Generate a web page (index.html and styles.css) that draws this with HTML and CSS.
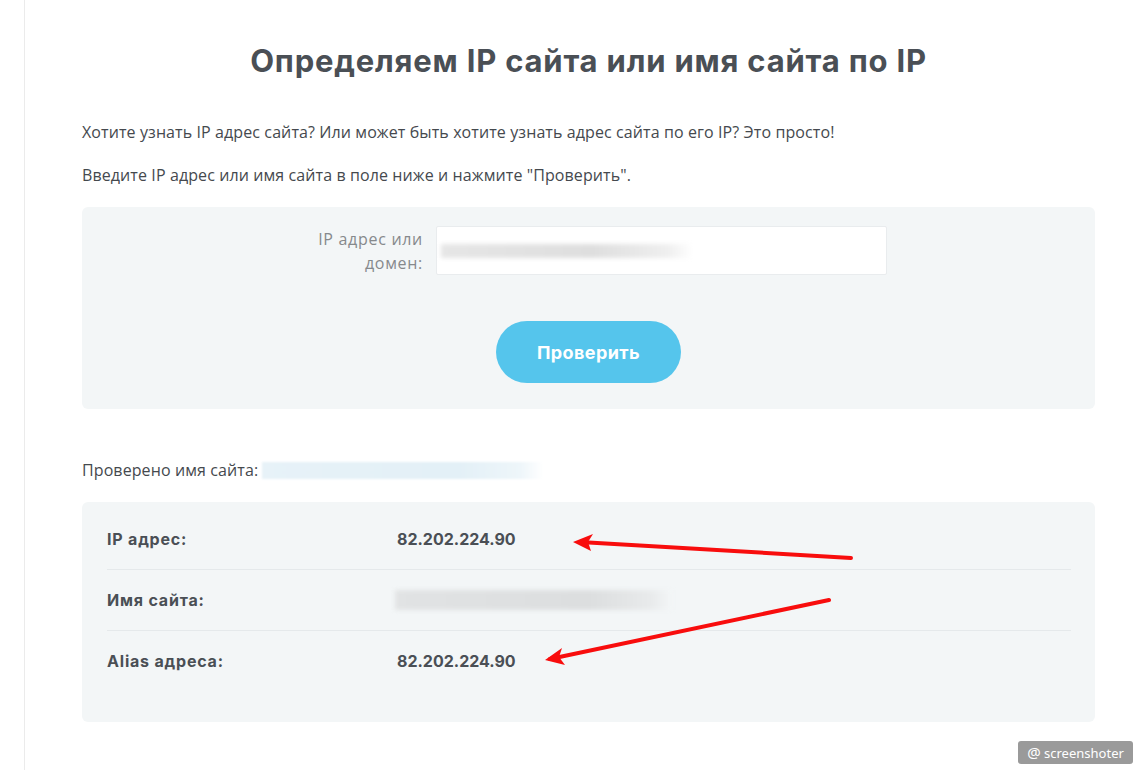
FILE: index.html
```html
<!DOCTYPE html>
<html lang="ru">
<head>
<meta charset="utf-8">
<title>Определяем IP сайта</title>
<link rel="stylesheet" href="styles.css">
</head>
<body>
<div class="page">
  <main class="content">
    <h1 class="title">Определяем IP сайта или имя сайта по IP</h1>
    <p class="lead">Хотите узнать IP адрес сайта? Или может быть хотите узнать адрес сайта по его IP? Это просто!</p>
    <p class="lead">Введите IP адрес или имя сайта в поле ниже и нажмите "Проверить".</p>

    <form class="form-box">
      <div class="field">
        <label class="field-label">IP адрес или<br>домен:</label>
        <div class="field-input"><span class="blur blur-input"></span></div>
      </div>
      <div class="actions">
        <button type="button" class="btn">Проверить</button>
      </div>
    </form>

    <p class="checked">Проверено имя сайта: <span class="blur blur-checked"></span></p>

    <div class="results">
      <div class="row">
        <span class="row-label">IP адрес:</span>
        <span class="row-value">82.202.224.90</span>
      </div>
      <div class="row">
        <span class="row-label">Имя сайта:</span>
        <span class="row-value"><span class="blur blur-name"></span></span>
      </div>
      <div class="row">
        <span class="row-label">Alias адреса:</span>
        <span class="row-value">82.202.224.90</span>
      </div>
    </div>
  </main>
</div>

<svg class="arrows" width="1140" height="770" viewBox="0 0 1140 770">
  <g stroke="#f80d0d" stroke-width="4" stroke-linecap="round" stroke-linejoin="round" fill="none">
    <line x1="851" y1="558" x2="580" y2="542"/>
    <line x1="829" y1="600" x2="550" y2="659"/>
  </g>
  <g fill="#f80d0d">
    <polygon points="573,542 593,534 588,542 591,551"/>
    <polygon points="545,660 562,648 559,657 565,665"/>
  </g>
</svg>

<div class="badge"><span class="badge-at">@</span> screenshoter</div>
</body>
</html>
```

FILE: styles.css
```css
* { box-sizing: border-box; }

html, body {
  margin: 0;
  padding: 0;
  background: #ffffff;
}

body {
  font-family: "Open Sans", "Lato", "Liberation Sans", sans-serif;
  color: #45494e;
  width: 1140px;
  height: 770px;
  overflow: hidden;
  position: relative;
}

.page {
  margin-left: 24px;
  border-left: 1px solid #ebebeb;
  min-height: 770px;
  padding: 0 44px 0 57px;
}

.content {
  width: 1013px;
}

.title {
  margin: 0;
  padding-top: 42px;
  text-align: center;
  font-family: "Inter", "Noto Sans", sans-serif;
  font-weight: 700;
  font-size: 31px;
  line-height: 38px;
  color: #4a4f55;
  letter-spacing: 0.8px;
}

.lead {
  margin: 0;
  font-size: 16px;
  line-height: 20px;
  letter-spacing: 0.1px;
}

.title + .lead { margin-top: 42px; }
.lead + .lead { margin-top: 23px; }

.form-box {
  margin: 22px 0 0;
  background: #f3f6f7;
  border-radius: 6px;
  padding: 19px 0 25px;
  height: 202px;
}

.field {
  display: flex;
  align-items: center;
  margin-left: 213px;
}

.field-label {
  width: 141px;
  text-align: right;
  color: #86898c;
  font-size: 16px;
  line-height: 24px;
  letter-spacing: 0.7px;
  padding-right: 13px;
}

.field-input {
  width: 451px;
  height: 49px;
  background: #ffffff;
  border: 1px solid #e9ecee;
  border-radius: 2px;
  display: flex;
  align-items: center;
  padding-left: 4px;
}

.blur {
  display: inline-block;
  filter: blur(2px);
}

.blur-input {
  width: 252px;
  height: 14px;
  background: linear-gradient(90deg, #e6e6e6 0%, #dedede 60%, #efefef 90%, #ffffff 100%);
}

.actions {
  display: flex;
  justify-content: center;
  margin-top: 46px;
}

.btn {
  width: 185px;
  height: 62px;
  border: none;
  border-radius: 31px;
  background: #55c5ec;
  color: #ffffff;
  font-family: "Inter", "Noto Sans", sans-serif;
  font-weight: 700;
  font-size: 18px;
  letter-spacing: 0.4px;
  cursor: pointer;
}

.checked {
  margin: 51px 0 0;
  font-size: 16px;
  line-height: 20px;
  letter-spacing: 0.1px;
  display: flex;
  align-items: center;
}

.blur-checked {
  margin-left: 4px;
  width: 281px;
  height: 17px;
  background: linear-gradient(90deg, #e7f2f8 0%, #e3f0f7 70%, #eef6fa 92%, #ffffff 100%);
  filter: blur(1px);
}

.results {
  margin-top: 22px;
  background: #f3f6f7;
  border-radius: 6px;
  padding: 7px 24px 31px 25px;
}

.row {
  display: flex;
  align-items: center;
  height: 61px;
  border-bottom: 1px solid #e5e9eb;
  font-family: "Inter", "Noto Sans", sans-serif;
  font-weight: 700;
  font-size: 16px;
  color: #4a4f55;
}

.row:last-child { border-bottom: none; height: 60px; }

.row-label {
  width: 290px;
  letter-spacing: 0.8px;
}

.row-value {
  display: flex;
  align-items: center;
}

.blur-name {
  margin-left: -2px;
  width: 277px;
  height: 20px;
  background: linear-gradient(90deg, #e1e3e4 0%, #dcdedf 70%, #e8eaeb 92%, #f3f6f7 100%);
}

.arrows {
  position: absolute;
  left: 0;
  top: 0;
  pointer-events: none;
}

.badge {
  position: absolute;
  left: 1018px;
  top: 741px;
  width: 115px;
  height: 23px;
  background: #9a9a9a;
  border-radius: 3px;
  color: #ffffff;
  font-family: "Noto Sans", sans-serif;
  font-size: 13px;
  line-height: 23px;
  text-align: center;
}

.badge-at {
  font-size: 15px;
}
```
